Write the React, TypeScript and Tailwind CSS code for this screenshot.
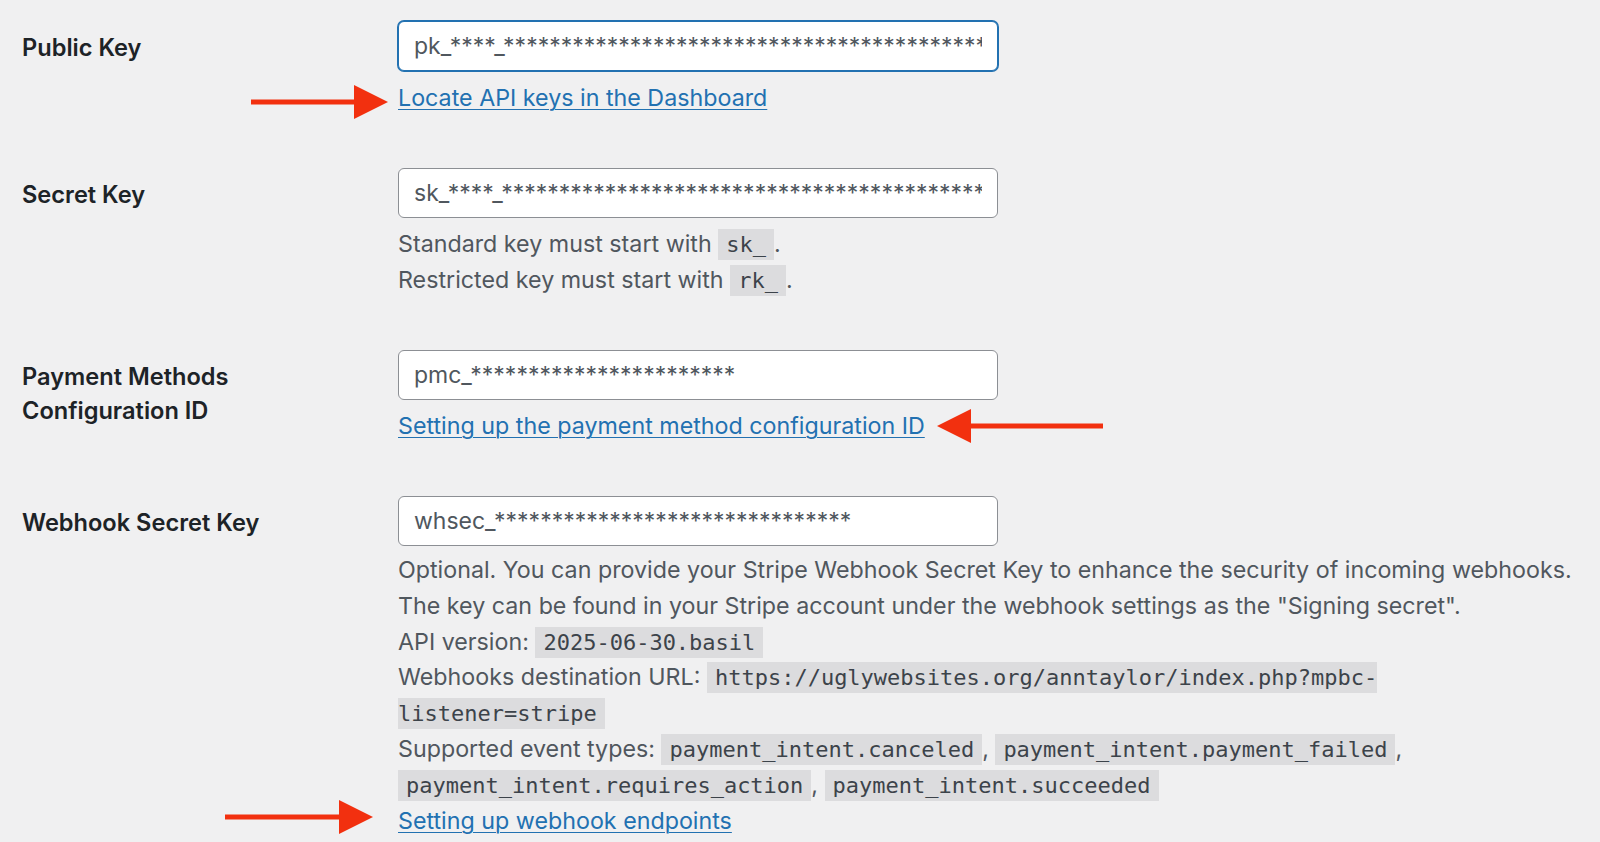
const sans = "font-['Inter','Noto_Sans',sans-serif]";
const mono = "font-['DejaVu_Sans_Mono','Liberation_Mono',monospace]";

function Arrow({ width, left = false }: { width: number; left?: boolean }) {
  const head = 34;
  return (
    <svg width={width} height="36" viewBox={`0 0 ${width} 36`} className={left ? 'scale-x-[-1]' : ''}>
      <rect x="0" y="15.5" width={width - head + 4} height="5" fill="#f2300f" />
      <polygon points={`${width - head},1 ${width},18 ${width - head},35`} fill="#f2300f" />
    </svg>
  );
}

function Code({ children }: { children: React.ReactNode }) {
  return (
    <code className={`${mono} bg-[#dcdcde] px-[8px] py-[3px] text-[22px] leading-none text-[#3c434a]`}>{children}</code>
  );
}

function Field({ value, focused = false }: { value: string; focused?: boolean }) {
  return (
    <input
      readOnly
      value={value}
      className={`${sans} block h-[50px] w-[600px] rounded-[6px] border bg-white px-[15px] text-[23px] text-[#50575e] outline-none ${
        focused ? 'border-[#2271b1] shadow-[0_0_0_1px_#2271b1]' : 'border-[#8c8f94]'
      }`}
    />
  );
}

function Row({ label, children }: { label: React.ReactNode; children: React.ReactNode }) {
  return (
    <div className="flex">
      <div className="w-[376px] shrink-0 pt-[10px] text-[23.6px] font-semibold leading-[34px] text-[#1d2327]">{label}</div>
      <div className="min-w-0 flex-1">{children}</div>
    </div>
  );
}

const link = 'text-[#2271b1] underline decoration-1 underline-offset-[3px]';

export default function App() {
  return (
    <div className={`${sans} min-h-screen bg-[#f0f0f1] pl-[22px] pr-[23px] pt-[21px]`}>
      <div className="flex flex-col gap-[52px]">
        <Row label="Public Key">
          <Field focused value={'pk_****_' + '*'.repeat(60)} />
          <div className="relative mt-[9px] text-[23.25px] leading-[36px]">
            <div className="absolute left-[-147px] top-[4px]">
              <Arrow width={137} />
            </div>
            <a className={link}>Locate API keys in the Dashboard</a>
          </div>
        </Row>

        <Row label="Secret Key">
          <Field value={'sk_****_' + '*'.repeat(60)} />
          <div className="mt-[8px] text-[23.25px] leading-[36px] text-[#50575e]">
            <p>
              Standard key must start with <Code>sk_</Code>.
            </p>
            <p>
              Restricted key must start with <Code>rk_</Code>.
            </p>
          </div>
        </Row>

        <Row
          label={
            <>
              Payment Methods
              <br />
              Configuration ID
            </>
          }
        >
          <Field value={'pmc_' + '*'.repeat(23)} />
          <div className="mt-[8px] flex items-center text-[23.25px] leading-[36px]">
            <a className={link}>Setting up the payment method configuration ID</a>
            <span className="ml-[12px] flex">
              <Arrow width={166} left />
            </span>
          </div>
        </Row>

        <Row label="Webhook Secret Key">
          <Field value={'whsec_' + '*'.repeat(31)} />
          <div className="mt-[6px] text-[23.25px] leading-[35.8px] text-[#50575e]">
            <p>Optional. You can provide your Stripe Webhook Secret Key to enhance the security of incoming webhooks.</p>
            <p>The key can be found in your Stripe account under the webhook settings as the "Signing secret".</p>
            <p>
              API version: <Code>2025-06-30.basil</Code>
            </p>
            <p>
              Webhooks destination URL: <Code>https://uglywebsites.org/anntaylor/index.php?mpbc-listener=stripe</Code>
            </p>
            <p>
              Supported event types: <Code>payment_intent.canceled</Code>, <Code>payment_intent.payment_failed</Code>,{' '}
              <Code>payment_intent.requires_action</Code>, <Code>payment_intent.succeeded</Code>
            </p>
            <p className="relative">
              <span className="absolute left-[-173px] top-[-4px]">
                <Arrow width={148} />
              </span>
              <a className={link}>Setting up webhook endpoints</a>
            </p>
          </div>
        </Row>
      </div>
    </div>
  );
}
